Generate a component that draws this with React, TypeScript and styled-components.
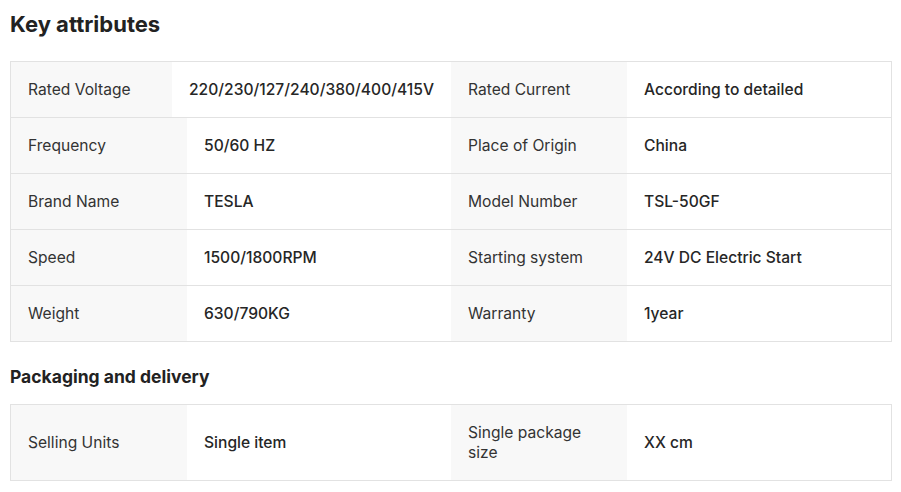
import React from "react";
import styled, { createGlobalStyle } from "styled-components";

const Global = createGlobalStyle`
  html, body { margin: 0; padding: 0; background: #fff; }
  body { font-family: Inter, "Noto Sans", "Liberation Sans", sans-serif; color: #222; }
`;

const Page = styled.div`
  padding: 10px 9px 0 10px;
`;

const Title = styled.h2<{ $size: number; $lh: number; $mt: number; $mb: number }>`
  margin: ${(p) => p.$mt}px 0 ${(p) => p.$mb}px 0;
  font-size: ${(p) => p.$size}px;
  line-height: ${(p) => p.$lh}px;
  font-weight: 700;
  color: #222;
`;

const Table = styled.div`
  border: 1px solid #e2e2e2;
  display: flex;
  flex-direction: column;
`;

const Row = styled.div`
  display: flex;
  & + & {
    border-top: 1px solid #e2e2e2;
  }
`;

const Half = styled.div`
  flex: 1 1 0;
  display: flex;
  min-width: 0;
`;

const Label = styled.div`
  flex: 0 1 40%;
  min-width: 0;
  background: #f8f8f8;
  padding: 17.5px 18px 17.5px 17px;
  min-height: 55px;
  box-sizing: border-box;
  display: flex;
  align-items: center;
  font-size: 15.6px;
  line-height: 20px;
  color: #333;
`;

const Value = styled.div`
  flex: 0 0 60%;
  min-width: min-content;
  box-sizing: border-box;
  padding: 17.5px 17px;
  display: flex;
  align-items: center;
  font-size: 15.6px;
  line-height: 20px;
  font-weight: 500;
  color: #262626;
  white-space: nowrap;
`;

type Pair = [string, string];

const keyAttrs: [Pair, Pair][] = [
  [["Rated Voltage", "220/230/127/240/380/400/415V"], ["Rated Current", "According to detailed"]],
  [["Frequency", "50/60 HZ"], ["Place of Origin", "China"]],
  [["Brand Name", "TESLA"], ["Model Number", "TSL-50GF"]],
  [["Speed", "1500/1800RPM"], ["Starting system", "24V DC Electric Start"]],
  [["Weight", "630/790KG"], ["Warranty", "1year"]],
];

const packaging: [Pair, Pair][] = [
  [["Selling Units", "Single item"], ["Single package size", "XX cm"]],
];

const AttrTable = ({ rows }: { rows: [Pair, Pair][] }) => (
  <Table>
    {rows.map((r, i) => (
      <Row key={i}>
        {r.map(([l, v], j) => (
          <Half key={j}>
            <Label>{l}</Label>
            <Value>{v}</Value>
          </Half>
        ))}
      </Row>
    ))}
  </Table>
);

export default function App() {
  return (
    <Page>
      <Global />
      <Title $size={22} $lh={28} $mt={0} $mb={23}>Key attributes</Title>
      <AttrTable rows={keyAttrs} />
      <Title $size={17.5} $lh={24} $mt={23} $mb={15}>Packaging and delivery</Title>
      <AttrTable rows={packaging} />
    </Page>
  );
}
